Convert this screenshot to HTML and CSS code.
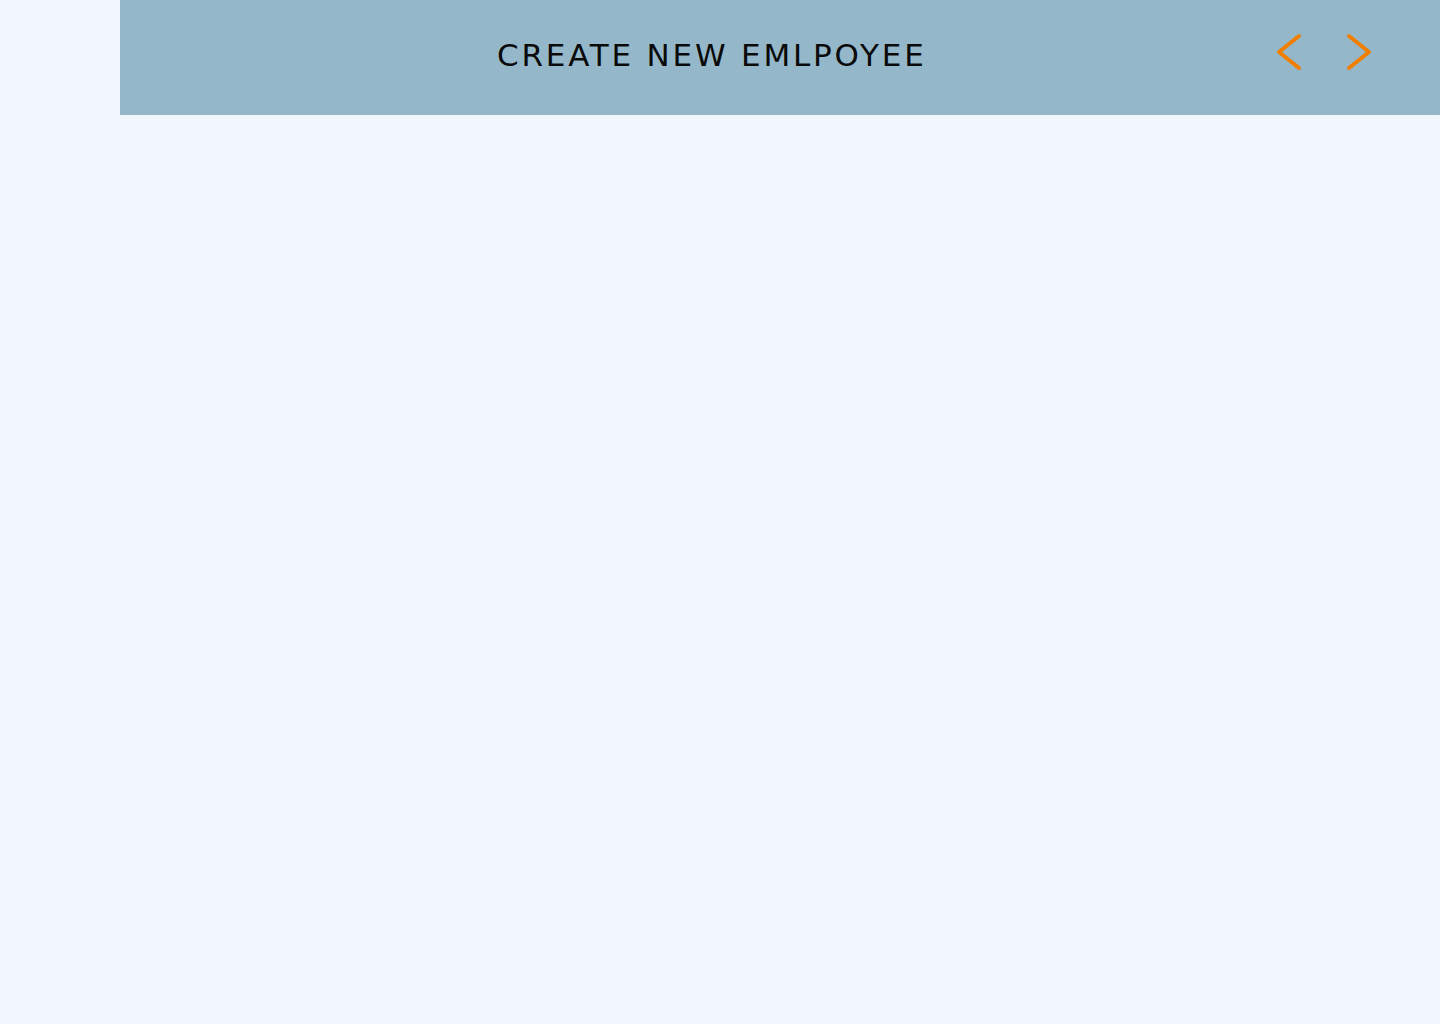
FILE: index.html
```html
<!DOCTYPE html>
<html lang="en">
<head>
<meta charset="utf-8">
<title>Create new employee</title>
<link rel="stylesheet" href="styles.css">
</head>
<body>
<div class="layout">
  <aside class="sidebar"></aside>
  <main class="main">
    <header class="topbar">
      <h1 class="title">CREATE NEW EMLPOYEE</h1>
      <nav class="arrows">
        <button class="arrow" aria-label="Previous">
          <svg width="32" height="40" viewBox="0 0 32 40"><polyline points="27,4 7,20 27,36" fill="none" stroke="#f07f00" stroke-width="4" stroke-linecap="round" stroke-linejoin="round"/></svg>
        </button>
        <button class="arrow" aria-label="Next">
          <svg width="32" height="40" viewBox="0 0 32 40"><polyline points="7,4 27,20 7,36" fill="none" stroke="#f07f00" stroke-width="4" stroke-linecap="round" stroke-linejoin="round"/></svg>
        </button>
      </nav>
    </header>
  </main>
</div>
</body>
</html>
```
FILE: styles.css
```css
html, body {
  margin: 0;
  padding: 0;
  background: #f2f7fe;
  font-family: "DejaVu Sans", "Open Sans", sans-serif;
}
.layout {
  display: flex;
  min-height: 1024px;
}
.sidebar {
  width: 120px;
  flex: none;
}
.main {
  flex: 1;
}
.topbar {
  height: 115px;
  box-sizing: border-box;
  background: #94b8c9;
  display: flex;
  align-items: flex-start;
  padding-left: 377px;
  padding-right: 66px;
}
.title {
  margin: 40px 0 0 0;
  font-weight: 400;
  font-size: 31px;
  line-height: 1;
  letter-spacing: 2.8px;
  color: #0a0a0a;
}
.arrows {
  margin-left: auto;
  margin-top: 32px;
  display: flex;
  gap: 38px;
}
.arrow {
  background: none;
  border: 0;
  padding: 0;
  width: 32px;
  height: 40px;
  cursor: pointer;
}
.arrow svg { display: block; }
```
